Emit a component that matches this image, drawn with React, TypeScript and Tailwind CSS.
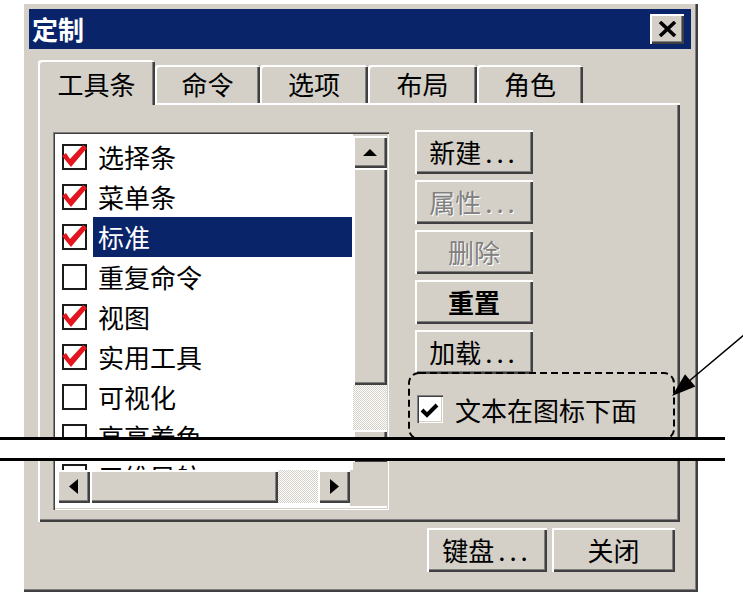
import React from 'react';

const raised =
  'shadow-[inset_2px_2px_0_#ffffff,inset_-2px_-2px_0_#404040,inset_-3px_-3px_0_#808080]';
const sunken =
  'shadow-[inset_1px_1px_0_#808080,inset_2px_2px_0_#404040,inset_-1px_-1px_0_#ffffff,inset_-2px_-2px_0_#d4d0c8]';
const dither =
  'bg-[repeating-conic-gradient(#ffffff_0_25%,#d4d0c8_0_50%)] bg-[length:2px_2px]';
const disabled = 'text-[#808080] [text-shadow:1px_1px_0_#ffffff]';

const items = [
  { label: '选择条', checked: true },
  { label: '菜单条', checked: true },
  { label: '标准', checked: true, selected: true },
  { label: '重复命令', checked: false },
  { label: '视图', checked: true },
  { label: '实用工具', checked: true },
  { label: '可视化', checked: false },
  { label: '高亮着色', checked: false },
  { label: '三维导航', checked: false },
];

const tabs = [
  { label: '工具条', w: 'w-[117px]', active: true },
  { label: '命令', w: 'w-[105px]' },
  { label: '选项', w: 'w-[108px]' },
  { label: '布局', w: 'w-[109px]' },
  { label: '角色', w: 'w-[106px]' },
];

const RedCheck = () => (
  <svg className="absolute -left-[2px] -top-[2px] overflow-visible" width="25" height="26" viewBox="0 0 25 26">
    <polygon points="0,12 4,9 8,15 21,1 25,4 9,23" fill="#e3161e" />
  </svg>
);

const ListRow = ({ label, checked, selected }: { label: string; checked: boolean; selected?: boolean }) => (
  <div className="flex items-center h-[40px] shrink-0">
    <div className="relative ml-[7px] w-[25px] h-[26px] border-2 border-[#1a1a1a] bg-white shrink-0">
      {checked && <RedCheck />}
    </div>
    <div
      className={`ml-[6px] flex-1 h-[40px] flex items-center pl-[5px] mr-[1px] whitespace-nowrap ${
        selected ? 'bg-[#0a246a] text-white' : 'text-black'
      }`}
    >
      {label}
    </div>
  </div>
);

const Button = ({
  children,
  className = '',
}: {
  children: React.ReactNode;
  className?: string;
}) => (
  <div className={`flex items-center justify-center bg-[#d4d0c8] ${raised} ${className}`}>{children}</div>
);

const Dots = () => <span className="tracking-[4px] ml-[4px]">...</span>;

const App = () => {
  return (
    <div className="relative w-[743px] h-[594px] bg-white overflow-hidden [font-family:'Noto_Sans_CJK_SC',sans-serif] text-[26px] leading-none text-black">
      <div className="pt-[2px] pl-[22px]">
        {/* Dialog */}
        <div className={`w-[676px] h-[590px] bg-[#d4d0c8] p-[7px] flex flex-col ${raised}`}>
          {/* Title bar */}
          <div className="h-[40px] bg-[#0a246a] flex items-center justify-between pl-[3px]">
            <span className="text-white font-bold">定制</span>
            <div className={`w-[34px] h-[30px] mr-[7px] flex items-center justify-center bg-[#d4d0c8] ${raised}`}>
              <svg width="19" height="16" viewBox="0 0 19 16">
                <path d="M2 1 L17 15 M17 1 L2 15" stroke="#000" strokeWidth="3.6" />
              </svg>
            </div>
          </div>

          {/* Tabs */}
          <div className="mt-[11px] h-[43px] pl-[9px] flex items-end">
            {tabs.map((t) => (
              <div
                key={t.label}
                className={`${t.w} flex items-center justify-center rounded-t-[3px] bg-[#d4d0c8] shadow-[inset_2px_2px_0_#ffffff,inset_-2px_0_0_#404040,inset_-3px_0_0_#808080] ${
                  t.active ? 'h-[45px] -mb-[2px] relative z-10 pt-[2px]' : 'h-[38px]'
                }`}
              >
                {t.label}
              </div>
            ))}
          </div>

          {/* Tab panel */}
          <div className={`ml-[9px] w-[642px] h-[419px] pl-[15px] pt-[27px] flex items-start ${raised}`}>
            {/* List box */}
            <div className={`mt-[2px] w-[336px] h-[378px] bg-white p-[2px] flex flex-col ${sunken}`}>
              <div className="flex h-[336px]">
                <div className="flex-1 pt-[3px] overflow-hidden flex flex-col">
                  {items.map((it) => (
                    <ListRow key={it.label} {...it} />
                  ))}
                </div>
                <div className="w-[34px] pt-[2px] flex flex-col bg-[#d4d0c8]">
                  <div className={`h-[32px] flex items-center justify-center bg-[#d4d0c8] ${raised}`}>
                    <svg width="14" height="7" viewBox="0 0 14 7">
                      <polygon points="7,0 14,7 0,7" fill="#000" />
                    </svg>
                  </div>
                  <div className={`h-[217px] bg-[#d4d0c8] ${raised}`} />
                  <div className={`h-[45px] ${dither}`} />
                  <div className={`h-[32px] flex items-center justify-center bg-[#d4d0c8] ${raised}`}>
                    <svg width="14" height="7" viewBox="0 0 14 7">
                      <polygon points="0,0 14,0 7,7" fill="#000" />
                    </svg>
                  </div>
                </div>
              </div>
              <div className="flex h-[36px]">
                <div className="pl-[2px] flex h-[33px]">
                  <div className={`w-[33px] flex items-center justify-center bg-[#d4d0c8] ${raised}`}>
                    <svg width="9" height="15" viewBox="0 0 9 15">
                      <polygon points="0,7.5 9,0 9,15" fill="#000" />
                    </svg>
                  </div>
                  <div className={`w-[188px] bg-[#d4d0c8] ${raised}`} />
                  <div className={`w-[40px] ${dither}`} />
                  <div className={`w-[32px] flex items-center justify-center bg-[#d4d0c8] ${raised}`}>
                    <svg width="9" height="15" viewBox="0 0 9 15">
                      <polygon points="9,7.5 0,0 0,15" fill="#000" />
                    </svg>
                  </div>
                </div>
                <div className="flex-1 bg-[#d4d0c8]" />
              </div>
            </div>

            {/* Buttons column */}
            <div className="ml-[26px] flex flex-col items-start">
              <div className="flex flex-col gap-[6px]">
                <Button className="w-[118px] h-[44px]">
                  新建<Dots />
                </Button>
                <Button className={`w-[118px] h-[44px] ${disabled}`}>
                  属性<Dots />
                </Button>
                <Button className={`w-[118px] h-[44px] ${disabled}`}>删除</Button>
                <Button className="w-[118px] h-[44px] font-bold">重置</Button>
                <Button className="w-[118px] h-[44px]">
                  加载<Dots />
                </Button>
              </div>
              {/* dashed callout box */}
              <div className="relative -mt-[2px] -ml-[7px] w-[267px] h-[68px] pl-[9px] pt-[23px] flex items-start">
                <svg className="absolute left-0 top-0 pointer-events-none" width="267" height="68" viewBox="0 0 267 68">
                  <rect
                    x="1"
                    y="1"
                    width="265"
                    height="66"
                    rx="10"
                    fill="none"
                    stroke="#000"
                    strokeWidth="2"
                    strokeDasharray="7 4"
                  />
                </svg>
                <div className={`relative w-[26px] h-[28px] bg-white shrink-0 ${sunken}`}>
                  <svg className="absolute left-0 top-0" width="26" height="28" viewBox="0 0 26 28">
                    <polyline points="5,15 10,20 20,10" fill="none" stroke="#000" strokeWidth="4" />
                  </svg>
                </div>
                <span className="ml-[12px] mt-[2px]">文本在图标下面</span>
              </div>
            </div>
          </div>

          {/* Bottom buttons */}
          <div className="mt-[6px] pr-[16px] flex justify-end gap-[5px]">
            <Button className="w-[120px] h-[44px]">
              键盘<Dots />
            </Button>
            <Button className="w-[123px] h-[44px]">关闭</Button>
          </div>
        </div>
      </div>

      {/* Break marker */}
      <div className="absolute left-0 top-[437px] w-[725px] h-[24px] bg-white border-y-[3px] border-black" />

      {/* Callout arrow */}
      <svg className="absolute left-0 top-0 pointer-events-none" width="743" height="594" viewBox="0 0 743 594">
        <line x1="745" y1="334" x2="688" y2="382" stroke="#000" strokeWidth="1.6" />
        <polygon points="672,396 695.4,386.5 685,374.3" fill="#000" />
      </svg>
    </div>
  );
};

export default App;
